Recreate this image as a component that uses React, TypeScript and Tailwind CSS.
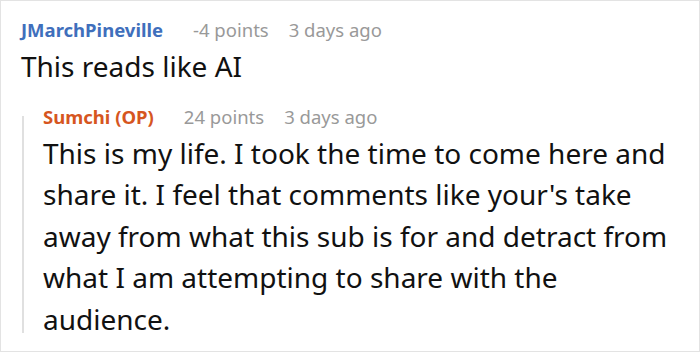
export default function App() {
  return (
    <div className="w-[700px] h-[352px] bg-white border border-[#e3e3e3] overflow-hidden" style={{ fontFamily: '"Noto Sans", sans-serif' }}>
      <div className="pl-[20px] pt-[16px]">
        <div className="flex items-baseline text-[18.5px] leading-[26px]">
          <span className="font-bold text-[#3f6fbc]">JMarchPineville</span>
          <span className="ml-[30px] text-[#999999]">-4 points</span>
          <span className="ml-[20px] text-[#999999]">3 days ago</span>
        </div>
        <div className="text-[28px] leading-[40px] text-[#111111] mt-[3px]">This reads like AI</div>
        <div className="flex mt-[18px] ml-[1px]">
          <div className="w-[2px] bg-[#e0e0e0] mt-[12px] mb-[7px]"></div>
          <div className="pl-[19px]">
            <div className="flex items-baseline text-[18.5px] leading-[26px]">
              <span className="font-bold text-[#d6561f]">Sumchi (OP)</span>
              <span className="ml-[30px] text-[#999999]">24 points</span>
              <span className="ml-[20px] text-[#999999]">3 days ago</span>
            </div>
            <div className="text-[28px] leading-[41.5px] text-[#111111] mt-[2.5px]">
              This is my life. I took the time to come here and<br />
              share it. I feel that comments like your's take<br />
              away from what this sub is for and detract from<br />
              what I am attempting to share with the<br />
              audience.
            </div>
          </div>
        </div>
      </div>
    </div>
  );
}
